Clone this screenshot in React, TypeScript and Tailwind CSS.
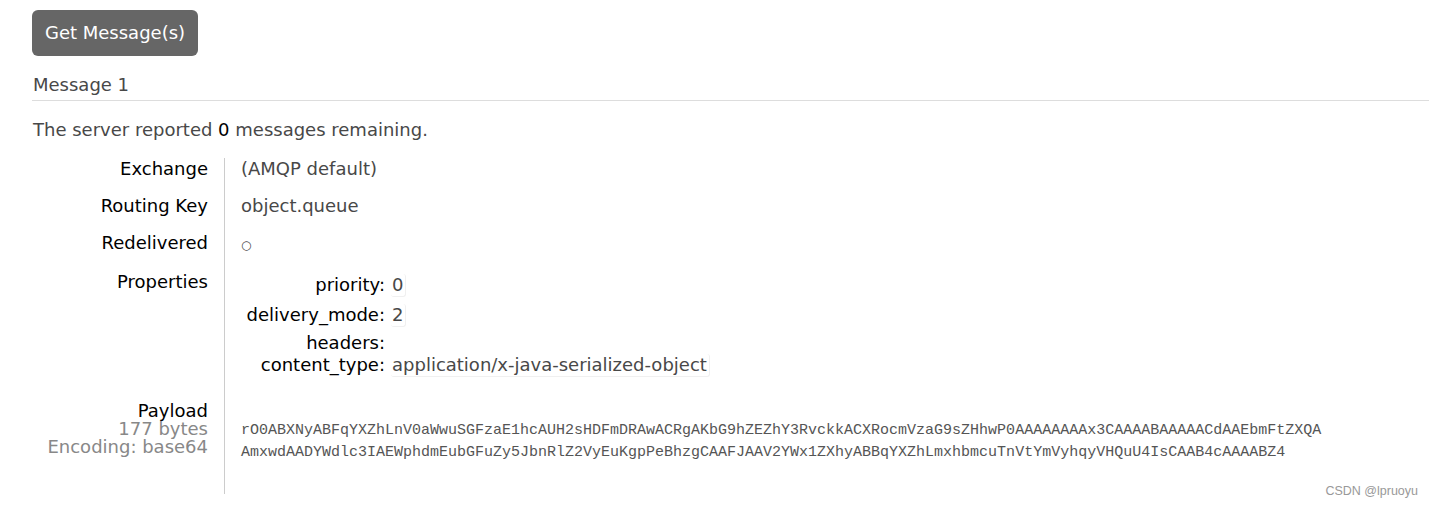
const exchangeRows = [
  { label: "Exchange", value: "(AMQP default)" },
  { label: "Routing Key", value: "object.queue" },
];

const props = [
  { key: "priority", value: "0", gap: "pb-[7px]" },
  { key: "delivery_mode", value: "2", gap: "pb-[5px]" },
  { key: "headers", value: "", gap: "" },
  { key: "content_type", value: "application/x-java-serialized-object", gap: "" },
];

const payload = [
  "rO0ABXNyABFqYXZhLnV0aWwuSGFzaE1hcAUH2sHDFmDRAwACRgAKbG9hZEZhY3RvckkACXRocmVzaG9sZHhwP0AAAAAAAAx3CAAAABAAAAACdAAEbmFtZXQA",
  "AmxwdAADYWdlc3IAEWphdmEubGFuZy5JbnRlZ2VyEuKgpPeBhzgCAAFJAAV2YWx1ZXhyABBqYXZhLmxhbmcuTnVtYmVyhqyVHQuU4IsCAAB4cAAAABZ4",
];

export default function App() {
  return (
    <main className="relative min-h-[507px] bg-white pl-[32px] pt-[10px] font-['DejaVu_Sans',sans-serif] text-[18px] leading-[22px] text-[#484848]">

      {/* Action */}
      <button className="h-[46px] w-[166px] rounded-[6px] bg-[#666666] text-center text-[18px] text-white">
        Get Message(s)
      </button>

      {/* Header */}
      <h2 className="mt-[18px] border-b border-[#dddddd] pb-[4px] pl-[1px] text-[18px] font-normal">
        Message 1
      </h2>

      <p className="mt-[18px] pl-[1px]">
        The server reported <span className="text-black">0</span> messages remaining.
      </p>

      {/* Details */}
      <div className="mt-[17px]">

        {exchangeRows.map((row) => (
          <div key={row.label} className="flex">
            <div className="w-[192px] pb-[15px] pr-[16px] text-right text-black">{row.label}</div>
            <div className="flex-1 border-l border-[#cccccc] pb-[15px] pl-[16px]">{row.value}</div>
          </div>
        ))}

        <div className="flex">
          <div className="w-[192px] pb-[15px] pr-[16px] text-right text-black">Redelivered</div>
          <div className="flex-1 border-l border-[#cccccc] pb-[15px] pl-[16px]">
            <span className="text-[12px]">○</span>
          </div>
        </div>

        <div className="flex">
          <div className="w-[192px] pr-[16px] text-right text-black">Properties</div>
          <div className="flex-1 border-l border-[#cccccc] pb-[25px] pl-[16px] pt-[3px]">
            {props.map((p) => (
              <div key={p.key} className={`flex ${p.gap}`}>
                <div className="w-[150px] pr-[6px] text-right text-black">{p.key}:</div>
                {p.value && (
                  <div className="rounded-[3px] border-b border-r border-[#f0f0f0] pl-[1px] pr-[2px]">{p.value}</div>
                )}
              </div>
            ))}
          </div>
        </div>

        <div className="flex">
          <div className="w-[192px] pr-[16px] text-right leading-[18px]">
            <div className="text-black">Payload</div>
            <div className="text-[#888888]">177 bytes</div>
            <div className="text-[#888888]">Encoding: base64</div>
          </div>
          <div className="h-[92px] flex-1 border-l border-[#cccccc] pl-[16px] pt-[18px]">
            {payload.map((line) => (
              <div key={line} className="whitespace-pre font-['Liberation_Mono',monospace] text-[15px] leading-[22px] text-[#555555]">
                {line}
              </div>
            ))}
          </div>
        </div>

      </div>

      <span className="absolute bottom-[8px] right-[11px] font-['Liberation_Sans',sans-serif] text-[12.5px] leading-[16px] text-[#999999]">
        CSDN @lpruoyu
      </span>

    </main>
  );
}
